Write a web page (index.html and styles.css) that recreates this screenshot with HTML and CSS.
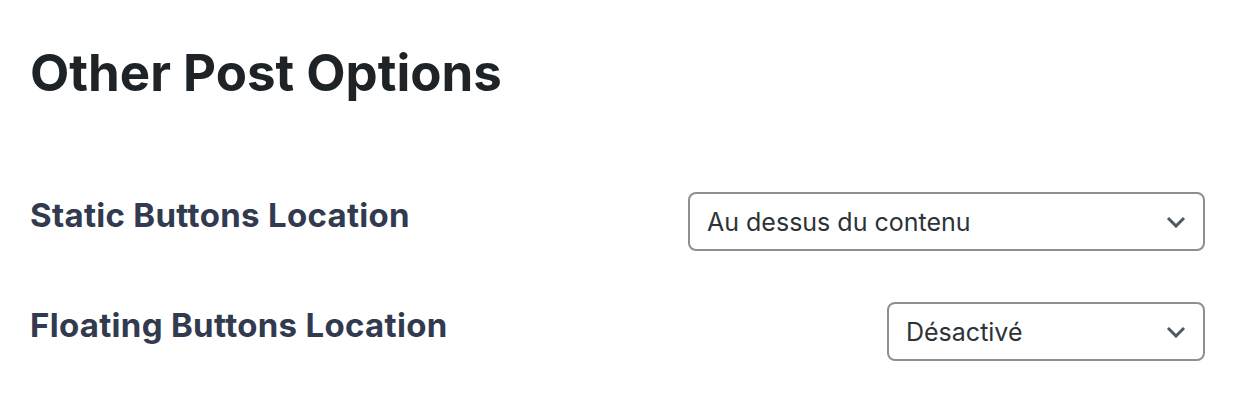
FILE: index.html
```html
<!DOCTYPE html>
<html lang="fr">
<head>
<meta charset="utf-8">
<link rel="stylesheet" href="styles.css">
</head>
<body>
<main class="page">
  <h2 class="title">Other Post Options</h2>
  <div class="options">
    <div class="row">
      <div class="label">Static Buttons Location</div>
      <div class="select select-wide">
        <span class="value">Au dessus du contenu</span>
        <svg class="chevron" width="20" height="12" viewBox="0 0 20 12"><path d="M2 2 L10 10 L18 2" fill="none" stroke="#50575e" stroke-width="3"/></svg>
      </div>
    </div>
    <div class="row">
      <div class="label">Floating Buttons Location</div>
      <div class="select select-narrow">
        <span class="value">Désactivé</span>
        <svg class="chevron" width="20" height="12" viewBox="0 0 20 12"><path d="M2 2 L10 10 L18 2" fill="none" stroke="#50575e" stroke-width="3"/></svg>
      </div>
    </div>
  </div>
</main>
</body>
</html>
```

FILE: styles.css
```css
html, body {
  margin: 0;
  padding: 0;
  background: #ffffff;
}
body {
  font-family: Inter, "Noto Sans", "Liberation Sans", sans-serif;
}
.page {
  padding: 42px 35px 0 30px;
}
.title {
  margin: 0;
  font-size: 51px;
  line-height: 62px;
  font-weight: 700;
  color: #1d2327;
}
.options {
  margin-top: 88px;
  display: flex;
  flex-direction: column;
  gap: 51px;
}
.row {
  display: flex;
  justify-content: space-between;
  align-items: flex-start;
}
.label {
  padding-top: 3px;
  font-size: 33px;
  line-height: 40px;
  font-weight: 700;
  letter-spacing: 0.3px;
  color: #323a4f;
}
.select {
  box-sizing: border-box;
  height: 59px;
  border: 2px solid #8c8f94;
  border-radius: 8px;
  display: flex;
  align-items: center;
  justify-content: space-between;
  padding: 0 17px 0 17px;
}
.select-wide { width: 517px; }
.select-narrow { width: 318px; }
.value {
  font-size: 25px;
  color: #2c3338;
}
.chevron {
  display: block;
}
```
